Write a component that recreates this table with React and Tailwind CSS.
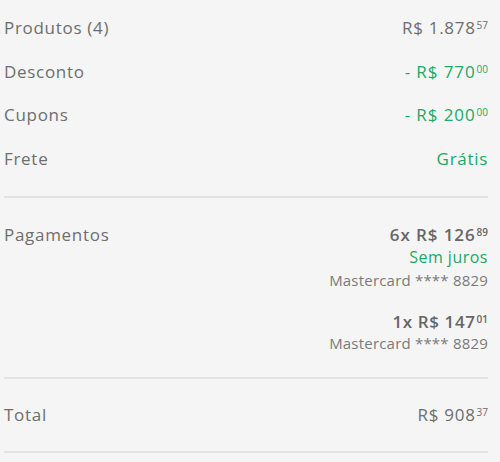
import React from "react";

const Sup = ({ children }) => (
  <span className="text-[10px] leading-none relative top-[-5px] ml-[1px] tracking-normal">
    {children}
  </span>
);

export default function App() {
  return (
    <div
      className="w-[500px] h-[462px] bg-[#f5f5f5] text-[#6e6e6e] overflow-hidden"
      style={{ fontFamily: '"Open Sans", sans-serif' }}
    >
      <div className="pl-[4px] pr-[12px] pt-[16px] flex flex-col">
        <div className="flex flex-col gap-[19.5px] text-[17px] leading-6 tracking-[0.7px]">
          <div className="flex justify-between h-6">
            <span>Produtos (4)</span>
            <span>
              R$ 1.878<Sup>57</Sup>
            </span>
          </div>
          <div className="flex justify-between h-6">
            <span>Desconto</span>
            <span className="text-[#21a865] font-medium tracking-[0.9px]">
              - R$ 770<Sup>00</Sup>
            </span>
          </div>
          <div className="flex justify-between h-6">
            <span>Cupons</span>
            <span className="text-[#21a865] font-medium tracking-[0.9px]">
              - R$ 200<Sup>00</Sup>
            </span>
          </div>
          <div className="flex justify-between h-6">
            <span>Frete</span>
            <span className="text-[#21a865] font-medium">Grátis</span>
          </div>
        </div>

        <div className="mt-[25px] h-[2px] bg-[#e2e2e2]" />

        <div className="mt-[25px] flex justify-between tracking-[0.7px]">
          <span className="text-[17px] leading-[23px] text-[#6e6e6e]">
            Pagamentos
          </span>
          <div className="flex flex-col items-end">
            <div className="flex flex-col items-end">
              <span className="text-[17px] leading-[23px] font-semibold text-[#666] tracking-[0.9px]">
                6x R$ 126<Sup>89</Sup>
              </span>
              <span className="text-[16px] leading-[23px] text-[#21a865] font-medium tracking-[0.5px]">
                Sem juros
              </span>
              <span className="text-[15px] leading-[23px] text-[#7a7a7a] tracking-[0.2px]">
                Mastercard **** 8829
              </span>
            </div>
            <div className="mt-[18px] flex flex-col items-end">
              <span className="text-[17px] leading-[23px] font-semibold text-[#666] tracking-[0.6px]">
                1x R$ 147<Sup>01</Sup>
              </span>
              <span className="text-[15px] leading-[21px] text-[#7a7a7a] tracking-[0.2px]">
                Mastercard **** 8829
              </span>
            </div>
          </div>
        </div>

        <div className="mt-[23px] h-[2px] bg-[#e2e2e2]" />

        <div className="mt-[24px] flex justify-between text-[17px] leading-6 tracking-[0.7px]">
          <span>Total</span>
          <span>
            R$ 908<Sup>37</Sup>
          </span>
        </div>

        <div className="mt-[24px] h-[2px] bg-[#e2e2e2]" />
      </div>
    </div>
  );
}
